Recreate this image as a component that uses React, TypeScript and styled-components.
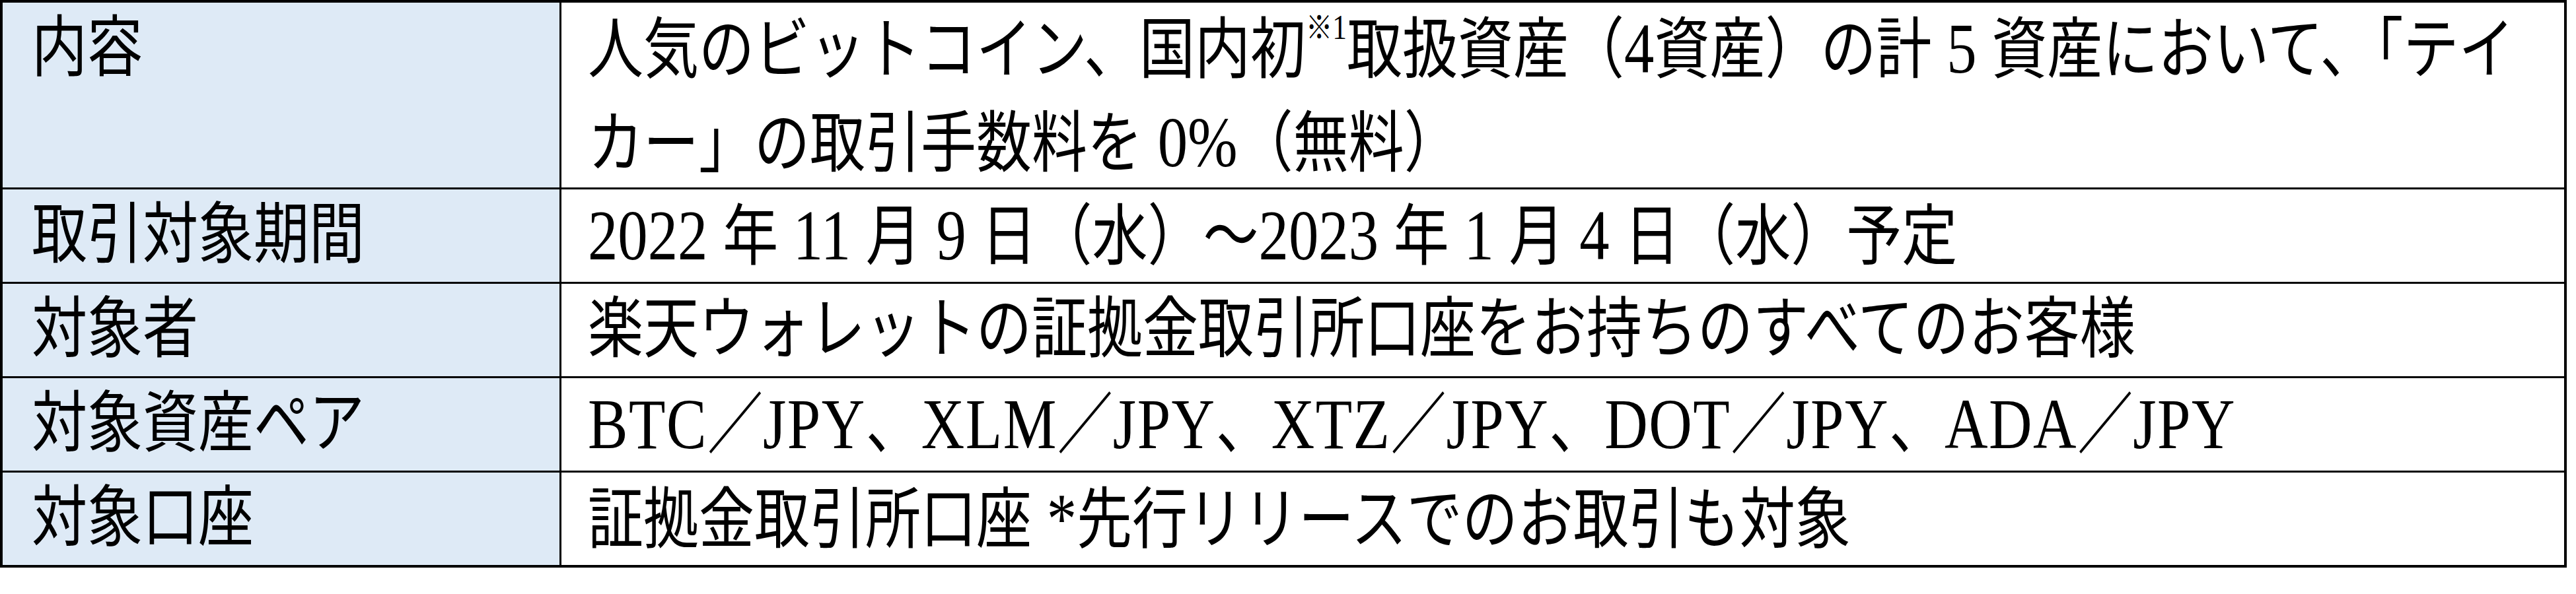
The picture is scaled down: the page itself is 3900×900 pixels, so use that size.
import React from "react";
import styled, { createGlobalStyle } from "styled-components";

const GlobalStyle = createGlobalStyle`
  html, body {
    margin: 0;
    padding: 0;
    background: #ffffff;
  }
  body {
    font-family: "Liberation Serif", "Noto Sans CJK JP", serif;
    color: #000000;
  }
`;

const Table = styled.div`
  display: grid;
  grid-template-columns: 843px 1fr;
  gap: 3px;
  padding: 4px;
  width: 3886px;
  box-sizing: border-box;
  background: #000000;
`;

const Cell = styled.div<{ $label?: boolean; $lines: number }>`
  background: ${(p) => (p.$label ? "#deeaf6" : "#ffffff")};
  height: ${(p) => p.$lines * 140}px;
  padding-left: ${(p) => (p.$label ? 44 : 40)}px;
  box-sizing: border-box;
`;

const Text = styled.div`
  font-family: "Liberation Serif", "Noto Sans CJK JP", serif;
  font-size: 84px;
  line-height: 116.67px;
  white-space: nowrap;
  transform: scaleY(1.2);
  transform-origin: top left;
`;

const Lat = styled.span<{ $wide?: boolean }>`
  font-family: "Liberation Serif", serif;
  font-size: 1.08em;
  letter-spacing: ${(p) => (p.$wide ? "1.5px" : "0")};
`;

const Sup = styled.span`
  font-size: 0.48em;
  line-height: 0;
  vertical-align: 1.05em;
`;

type Row = { label: string; lines: number; value: React.ReactNode };

const rows: Row[] = [
  {
    label: "内容",
    lines: 2,
    value: (
      <>
        人気のビットコイン、国内初
        <Sup>
          ※<Lat>1</Lat>
        </Sup>
        取扱資産（<Lat>4</Lat>資産）の計<Lat> 5 </Lat>資産において、「テイ
        <br />
        カー」の取引手数料を<Lat> 0%</Lat>（無料）
      </>
    ),
  },
  {
    label: "取引対象期間",
    lines: 1,
    value: (
      <>
        <Lat>2022 </Lat>年<Lat> 11 </Lat>月<Lat> 9 </Lat>日（水）～<Lat>2023 </Lat>年
        <Lat> 1 </Lat>月<Lat> 4 </Lat>日（水）予定
      </>
    ),
  },
  {
    label: "対象者",
    lines: 1,
    value: <>楽天ウォレットの証拠金取引所口座をお持ちのすべてのお客様</>,
  },
  {
    label: "対象資産ペア",
    lines: 1,
    value: (
      <>
        <Lat $wide>BTC</Lat>／<Lat $wide>JPY</Lat>、<Lat $wide>XLM</Lat>／<Lat $wide>JPY</Lat>、
        <Lat $wide>XTZ</Lat>／<Lat $wide>JPY</Lat>、<Lat $wide>DOT</Lat>／<Lat $wide>JPY</Lat>、
        <Lat $wide>ADA</Lat>／<Lat $wide>JPY</Lat>
      </>
    ),
  },
  {
    label: "対象口座",
    lines: 1,
    value: (
      <>
        証拠金取引所口座<Lat> *</Lat>先行リリースでのお取引も対象
      </>
    ),
  },
];

export default function App() {
  return (
    <>
      <GlobalStyle />
      <Table>
        {rows.map((r) => (
          <React.Fragment key={r.label}>
            <Cell $label $lines={r.lines}>
              <Text>{r.label}</Text>
            </Cell>
            <Cell $lines={r.lines}>
              <Text>{r.value}</Text>
            </Cell>
          </React.Fragment>
        ))}
      </Table>
    </>
  );
}
